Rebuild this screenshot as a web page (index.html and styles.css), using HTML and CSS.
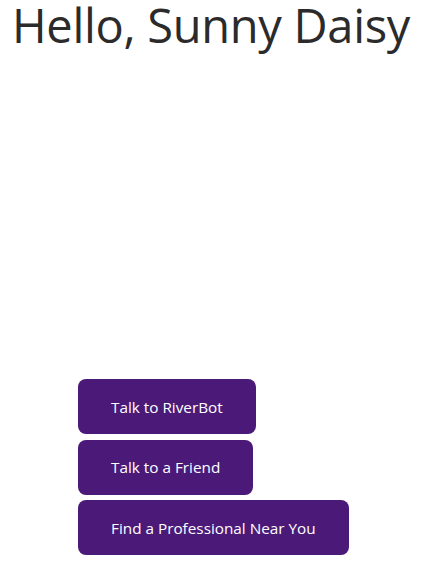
FILE: index.html
```html
<!DOCTYPE html>
<html>
<head>
<meta charset="utf-8">
<link rel="stylesheet" href="styles.css">
</head>
<body>
<div class="page">
  <h1 class="title">Hello, Sunny Daisy</h1>
  <div class="actions">
    <button class="btn">Talk to RiverBot</button>
    <button class="btn">Talk to a Friend</button>
    <button class="btn">Find a Professional Near You</button>
  </div>
</div>
</body>
</html>
```
FILE: styles.css
```css
html, body {
  margin: 0;
  padding: 0;
  background: #ffffff;
}
.page {
  font-family: "Open Sans", "Noto Sans", sans-serif;
  width: 436px;
  height: 573px;
  display: flex;
  flex-direction: column;
}
.title {
  margin: 0;
  padding: 0 0 0 12px;
  font-weight: 400;
  font-size: 47px;
  line-height: 50px;
  color: #2b2b2b;
  letter-spacing: -0.3px;
}
.actions {
  margin-top: 329px;
  padding-left: 78px;
  display: flex;
  flex-direction: column;
  align-items: flex-start;
  gap: 5.5px;
}
.btn {
  font-family: "Open Sans", "Noto Sans", sans-serif;
  font-size: 15.3px;
  height: 55px;
  padding: 0 33px;
  border: none;
  border-radius: 8px;
  background: #4b1a79;
  color: #ffffff;
  cursor: pointer;
}
```
